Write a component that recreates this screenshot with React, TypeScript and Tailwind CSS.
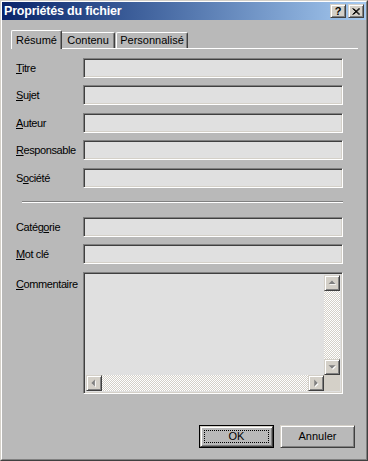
const fields = [
  { label: "Titre", key: 0, mt: "mt-[9px]" },
  { label: "Sujet", key: 0, mt: "mt-[7px]" },
  { label: "Auteur", key: 0, mt: "mt-[8px]" },
  { label: "Responsable", key: 0, mt: "mt-[7px]" },
  { label: "Société", key: 1, mt: "mt-[8px]" },
];

const raised =
  "border border-t-[#d4d0c8] border-l-[#d4d0c8] border-r-[#404040] border-b-[#404040] shadow-[inset_1px_1px_#ffffff,inset_-1px_-1px_#808080]";
const sunken =
  "border border-t-[#808080] border-l-[#808080] border-r-white border-b-white shadow-[inset_1px_1px_#404040,inset_-1px_-1px_#d4d0c8]";
const checker =
  "bg-[repeating-conic-gradient(#ffffff_0%_25%,#d4d0c8_0%_50%)] bg-[length:2px_2px]";

function Label({ text, at }: { text: string; at: number }) {
  return (
    <span className="tracking-[-0.4px]">
      {text.slice(0, at)}
      <u>{text[at]}</u>
      {text.slice(at + 1)}
    </span>
  );
}

function Arrow({ dir }: { dir: "up" | "down" | "left" | "right" }) {
  const pts = {
    up: "4,9 8,5 12,9",
    down: "4,6 8,10 12,6",
    left: "9,4 5,8 9,12",
    right: "6,4 10,8 6,12",
  }[dir];
  return (
    <svg width="14" height="14" viewBox="0 0 16 16" className="block">
      <polygon points={pts} transform="translate(1,1)" fill="#ffffff" />
      <polygon points={pts} fill="#808080" />
    </svg>
  );
}

function ScrollBtn({ dir }: { dir: "up" | "down" | "left" | "right" }) {
  return (
    <div className={`w-[16px] h-[16px] shrink-0 bg-[#d4d0c8] flex items-center justify-center ${raised}`}>
      <Arrow dir={dir} />
    </div>
  );
}

function Field({ label, at, mt }: { label: string; at: number; mt: string }) {
  return (
    <div className={`flex items-center ${mt}`}>
      <div className="w-[67px] ml-[14px] text-black">
        <Label text={label} at={at} />
      </div>
      <div className={`w-[260px] h-[20px] bg-[#e0e0e0] ${sunken}`} />
    </div>
  );
}

export default function App() {
  return (
    <div className="w-[368px] h-[461px] bg-[#b9b9b9] font-['Liberation_Sans',Arial,sans-serif] text-[11px]">
      <div className="w-[368px] h-[461px] border border-t-[#d4d0c8] border-l-[#d4d0c8] border-r-[#404040] border-b-[#404040]">
        <div className="h-full flex flex-col border border-t-white border-l-white border-r-[#808080] border-b-[#808080]">
          {/* barre de titre */}
          <div className="h-[18px] bg-linear-to-r from-[#0a246a] to-[#a6caf0] flex items-center pl-[2px] pr-[2px]">
            <span className="text-white font-bold text-[12.5px] tracking-[-0.2px] flex-1">Propriétés du fichier</span>
            <div className={`w-[16px] h-[14px] bg-[#d4d0c8] flex items-center justify-center ${raised}`}>
              <span className="font-bold text-[11px] leading-none text-black">?</span>
            </div>
            <div className={`w-[16px] h-[14px] ml-[2px] bg-[#d4d0c8] flex items-center justify-center ${raised}`}>
              <svg width="8" height="7" viewBox="0 0 8 7">
                <path d="M0.5 0.5 L7 6.5 M1.5 0.5 L8 6.5 M7 0.5 L0.5 6.5 M8 0.5 L1.5 6.5" stroke="#000" strokeWidth="1" />
              </svg>
            </div>
          </div>

          {/* onglets */}
          <div className="mt-[10px] ml-[9px] w-[347px] h-[19px] flex items-end border-b border-b-white">
            <div className="w-[51px] h-[19px] -mb-px bg-[#b9b9b9] border-l border-t border-l-white border-t-white border-r border-r-[#404040] rounded-tl-[2px] rounded-tr-[2px] shadow-[inset_-1px_0_#808080] flex items-center justify-center z-10">
              Résumé
            </div>
            <div className="w-[53px] h-[16px] border-t border-t-white border-r border-r-[#404040] rounded-tr-[2px] shadow-[inset_-1px_0_#808080] flex items-center justify-center">
              Contenu
            </div>
            <div className="w-[72px] h-[16px] ml-px border-l border-l-white border-t border-t-white border-r border-r-[#404040] rounded-tl-[2px] rounded-tr-[2px] shadow-[inset_-1px_0_#808080] flex items-center justify-center">
              Personnalisé
            </div>
          </div>

          {fields.map((f) => (
            <Field key={f.label} label={f.label} at={f.key} mt={f.mt} />
          ))}

          <div className="mt-[13px] ml-[20px] w-[321px] border-t border-t-[#808080] border-b border-b-white" />

          <Field label="Catégorie" at={5} mt="mt-[14px]" />
          <Field label="Mot clé" at={0} mt="mt-[7px]" />

          <div className="flex mt-[8px]">
            <div className="w-[67px] ml-[14px] pt-[4px] text-black">
              <Label text="Commentaire" at={0} />
            </div>
            <div className={`w-[260px] h-[122px] bg-[#e0e0e0] p-[2px] flex flex-col ${sunken}`}>
              <div className="flex flex-1">
                <div className="flex-1" />
                <div className={`w-[16px] flex flex-col ${checker}`}>
                  <ScrollBtn dir="up" />
                  <div className="flex-1" />
                  <ScrollBtn dir="down" />
                </div>
              </div>
              <div className="flex h-[16px]">
                <div className={`flex-1 flex ${checker}`}>
                  <ScrollBtn dir="left" />
                  <div className="flex-1" />
                  <ScrollBtn dir="right" />
                </div>
                <div className="w-[16px] bg-[#d4d0c8]" />
              </div>
            </div>
          </div>

          {/* boutons */}
          <div className="mt-[31px] flex justify-end gap-[6px] pr-[11px]">
            <div className="w-[75px] h-[23px] border border-black">
              <div className={`w-full h-full flex items-center justify-center p-[3px] ${raised}`}>
                <div className="w-full h-full border border-dotted border-black flex items-center justify-center">
                  OK
                </div>
              </div>
            </div>
            <div className={`w-[75px] h-[23px] flex items-center justify-center ${raised}`}>
              Annuler
            </div>
          </div>
        </div>
      </div>
    </div>
  );
}
